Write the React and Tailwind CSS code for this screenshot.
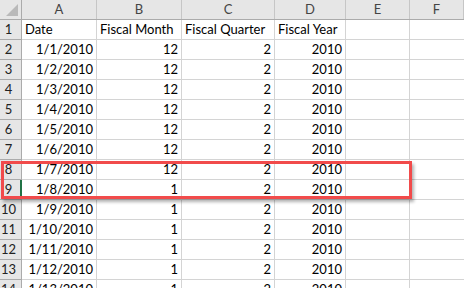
import React from 'react';

const cols = ['A', 'B', 'C', 'D', 'E', 'F'];

const rows = [
  ['Date', 'Fiscal Month', 'Fiscal Quarter', 'Fiscal Year'],
  ['1/1/2010', 12, 2, 2010],
  ['1/2/2010', 12, 2, 2010],
  ['1/3/2010', 12, 2, 2010],
  ['1/4/2010', 12, 2, 2010],
  ['1/5/2010', 12, 2, 2010],
  ['1/6/2010', 12, 2, 2010],
  ['1/7/2010', 12, 2, 2010],
  ['1/8/2010', 1, 2, 2010],
  ['1/9/2010', 1, 2, 2010],
  ['1/10/2010', 1, 2, 2010],
  ['1/11/2010', 1, 2, 2010],
  ['1/12/2010', 1, 2, 2010],
  ['1/13/2010', 1, 2, 2010],
];

const grid = 'grid grid-cols-[22px_75px_85px_93px_71px_64px_1fr]';

const App = () => {
  return (
    <div className="relative w-[464px] h-[288px] overflow-hidden bg-white font-['Lato',sans-serif] text-[13px] text-black">
      {/* column headers */}
      <div className={`${grid} h-[20px] bg-[#e6e6e6] border-b border-[#ababab]`}>
        <div className="relative border-r border-[#ababab]">
          <div className="absolute right-[3px] bottom-[3px] w-0 h-0 border-l-[12px] border-l-transparent border-b-[12px] border-b-[#b9b9b9]" />
        </div>
        {cols.map((c) => (
          <div
            key={c}
            className="border-r border-[#c6c6c6] text-center leading-[19px] text-[#444]"
          >
            {c}
          </div>
        ))}
      </div>

      {rows.map((r, i) => (
        <div key={i} className={`${grid} h-[20px]`}>
          <div className="relative bg-[#e6e6e6] border-r border-b border-[#ababab] leading-[19px] text-[#222]">
            <span className="block w-[17px] text-center">{i + 1}</span>
            {i === 8 && (
              <div className="absolute right-[-1px] top-0 w-[2px] h-[19px] bg-[#217346]" />
            )}
          </div>
          {r.map((v, j) => (
            <div
              key={j}
              className={`border-r border-b border-[#d4d4d4] leading-[19px] whitespace-nowrap ${
                i === 0 ? 'pl-[3px] text-left' : 'pr-[3px] text-right'
              }`}
            >
              {v}
            </div>
          ))}
          <div className="border-r border-b border-[#d4d4d4]" />
          <div className="border-b border-[#d4d4d4]" />
        </div>
      ))}

      {/* highlight around rows 8 and 9 */}
      <div className="absolute left-[1px] top-[161px] w-[411px] h-[38px] border-[3px] border-[#f14b4b] shadow-[2px_3px_3px_rgba(0,0,0,0.3)]" />
    </div>
  );
};

export default App;
